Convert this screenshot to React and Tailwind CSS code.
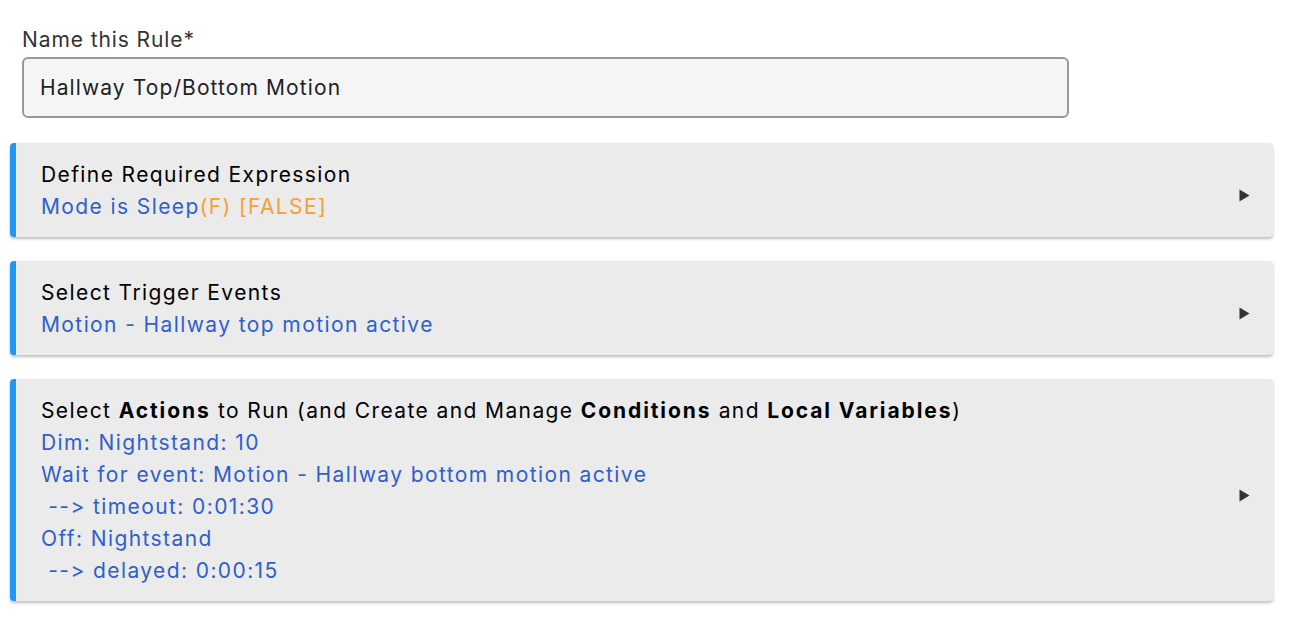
import { useState } from 'react'

const Arrow = () => (
  <svg width="11" height="13" viewBox="0 0 11 13" className="shrink-0 mt-[8px]">
    <path d="M0.5 0.5 L10.5 6.5 L0.5 12.5 Z" fill="#333" />
  </svg>
)

const Card = ({ children }) => (
  <div className="flex items-center bg-[#ebebeb] border-l-[6px] border-[#2196f3] rounded-[4px] shadow-[0_2px_3px_rgba(0,0,0,0.25)] pl-[25px] pr-[23px] pt-[16px] pb-[14px]">
    <div className="flex-1 leading-[32px]">{children}</div>
    <Arrow />
  </div>
)

const Blue = ({ children }) => <div className="text-[#2f5fcc] whitespace-pre">{children}</div>

const B = ({ children }) => <b className="font-bold tracking-[1.9px]">{children}</b>

export default function App() {
  const [name, setName] = useState('Hallway Top/Bottom Motion')

  return (
    <div className="bg-white min-h-screen pt-[24px] px-[10px] pr-[21px] text-[21px] font-['Inter',sans-serif] tracking-[1.4px] text-black">
      {/* Rule name */}
      <div className="pl-[12px]">
        <label className="block text-[#333] leading-[32px] tracking-[0.9px]">Name this Rule*</label>
        <input
          value={name}
          onChange={e => setName(e.target.value)}
          className="mt-[1px] w-[1047px] h-[61px] px-[16px] bg-[#f5f5f5] border-2 border-[#999] rounded-[6px] text-[21px] tracking-[1.1px] text-[#222] outline-none"
        />
      </div>

      <div className="mt-[25px] flex flex-col gap-[24px]">
        <Card>
          <div>Define Required Expression</div>
          <div className="whitespace-pre">
            <span className="text-[#2f5fcc]">Mode is Sleep</span>
            <span className="text-[#f5a033]">(F) [FALSE]</span>
          </div>
        </Card>

        <Card>
          <div>Select Trigger Events</div>
          <Blue>Motion - Hallway top motion active</Blue>
        </Card>

        <Card>
          <div>
            Select <B>Actions</B> to Run (and Create and Manage <B>Conditions</B> and <B>Local Variables</B>)
          </div>
          <Blue>Dim: Nightstand: 10</Blue>
          <Blue>Wait for event: Motion - Hallway bottom motion active</Blue>
          <Blue> --&gt; timeout: 0:01:30</Blue>
          <Blue>Off: Nightstand</Blue>
          <Blue> --&gt; delayed: 0:00:15</Blue>
        </Card>
      </div>
    </div>
  )
}
